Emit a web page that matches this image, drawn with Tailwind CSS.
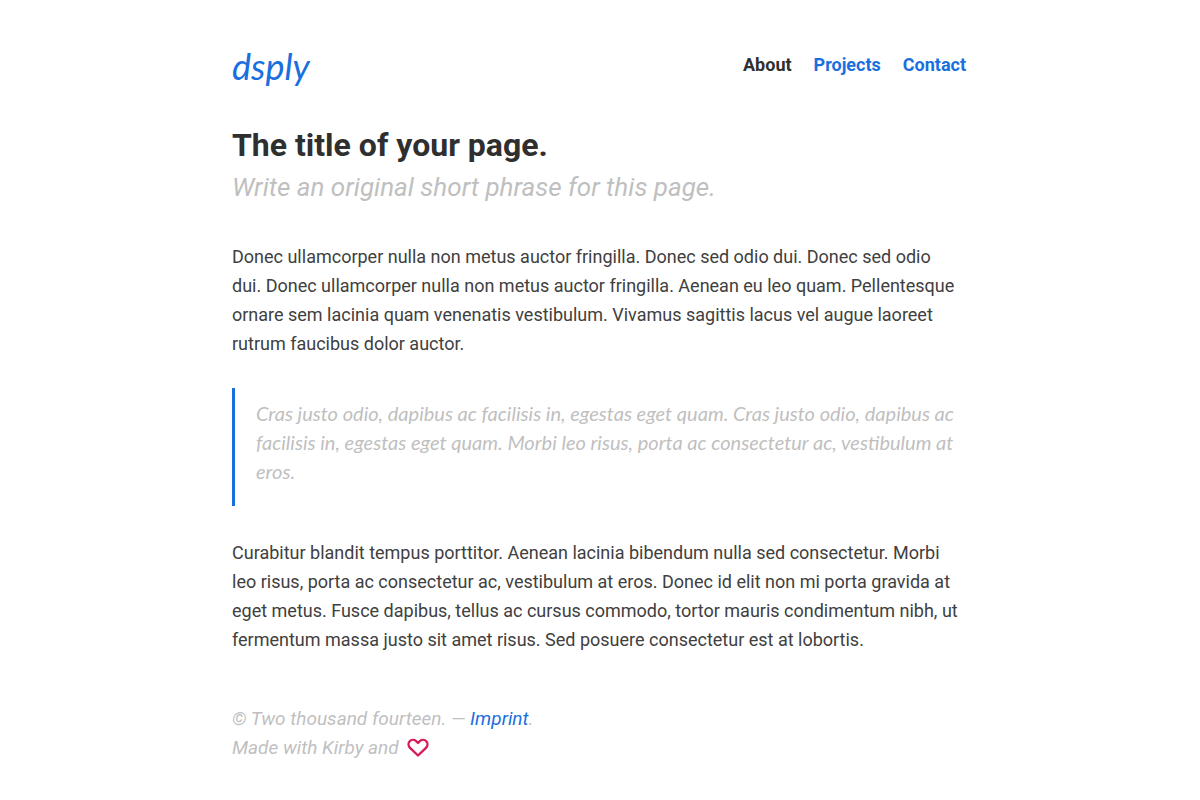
<!DOCTYPE html>
<html lang="en">
<head>
  <meta charset="UTF-8" />
  <meta name="viewport" content="width=device-width, initial-scale=1.0"/>
  <title>dsply</title>
  <script src="https://cdn.jsdelivr.net/npm/@tailwindcss/browser@4"></script>
</head>
<body class="bg-white text-[#404040] font-['Roboto',sans-serif] text-[18px]">
  <div class="max-w-[736px] mx-auto pt-11 pb-9">
    <header class="flex items-start justify-between">
      <a href="#" class="font-['Lato',sans-serif] italic text-[36px] leading-[44px] text-[#1a6fde]">dsply</a>
      <nav class="flex gap-[22px] pr-0.5 font-bold leading-[42px] text-[#1a6fde]">
        <a href="#" class="text-[#2f2f2f]">About</a>
        <a href="#">Projects</a>
        <a href="#">Contact</a>
      </nav>
    </header>

    <main class="leading-[29px]">
      <h1 class="mt-9 font-bold text-[32px] leading-[42px] text-[#2f2f2f]">The title of your page.</h1>
      <h2 class="italic text-[26px] leading-[42px] text-[#bfbfbf]">Write an original short phrase for this page.</h2>

      <p class="mt-[34px]">
        Donec ullamcorper nulla non metus auctor fringilla. Donec sed odio dui. Donec sed odio<br>
        dui. Donec ullamcorper nulla non metus auctor fringilla. Aenean eu leo quam. Pellentesque<br>
        ornare sem lacinia quam venenatis vestibulum. Vivamus sagittis lacus vel augue laoreet<br>
        rutrum faucibus dolor auctor.
      </p>

      <blockquote class="mt-[30px] mb-8 border-l-3 border-[#1a6fde] pt-[11px] pb-5 pl-[21px] font-['Lato',sans-serif] italic text-[20px] text-[#bfbfbf]">
        Cras justo odio, dapibus ac facilisis in, egestas eget quam. Cras justo odio, dapibus ac<br>
        facilisis in, egestas eget quam. Morbi leo risus, porta ac consectetur ac, vestibulum at<br>
        eros.
      </blockquote>

      <p>
        Curabitur blandit tempus porttitor. Aenean lacinia bibendum nulla sed consectetur. Morbi<br>
        leo risus, porta ac consectetur ac, vestibulum at eros. Donec id elit non mi porta gravida at<br>
        eget metus. Fusce dapibus, tellus ac cursus commodo, tortor mauris condimentum nibh, ut<br>
        fermentum massa justo sit amet risus. Sed posuere consectetur est at lobortis.
      </p>
    </main>

    <footer class="mt-[50px] italic text-[19px] leading-[29px] text-[#bfbfbf]">
      <p>© Two thousand fourteen. — <a href="#" class="text-[#1a6fde]">Imprint</a>.</p>
      <p class="flex items-center gap-2">Made with Kirby and
        <svg class="w-[22px] h-[20px]" viewBox="0 0 22 20" fill="none" stroke="#d81b56" stroke-width="2.4" stroke-linejoin="round" role="img" aria-label="love"><path d="M11 17.500 3 9.800C1.200 8 1.100 5 2.700 3.300 4.400 1.500 7.300 1.400 9 3l2 2 2-2c1.700-1.600 4.600-1.500 6.300.3 1.600 1.700 1.500 4.700-.3 6.500z"/></svg>
      </p>
    </footer>
  </div>
</body>
</html>
